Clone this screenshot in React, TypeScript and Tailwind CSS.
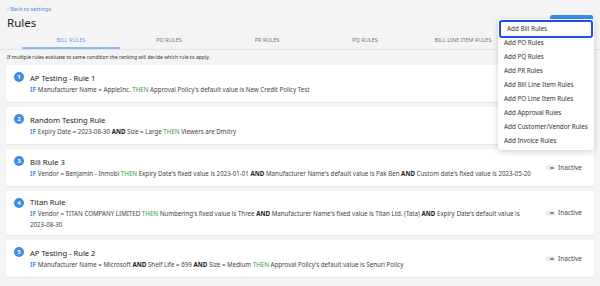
import React from "react";

const tabs = ["BILL RULES", "PO RULES", "PR RULES", "PQ RULES", "BILL LINE ITEM RULES"];

const menu = [
  "Add Bill Rules",
  "Add PO Rules",
  "Add PQ Rules",
  "Add PR Rules",
  "Add Bill Line Item Rules",
  "Add PO Line Item Rules",
  "Add Approval Rules",
  "Add Customer/Vendor Rules",
  "Add Invoice Rules",
];

const B = ({ children }: { children: React.ReactNode }) => <span className="font-bold text-[#222]">{children}</span>;
const T = () => <span className="text-[#2e9b3a]"> THEN </span>;
const If = () => <span className="text-[#4a90e2] font-bold mr-[2px]">IF</span>;
const D = ({ children }: { children: React.ReactNode }) => <span className="whitespace-nowrap">{children}</span>;

type Rule = { n: number; title: string; cond: React.ReactNode; toggle?: boolean };

const rules: Rule[] = [
  {
    n: 1,
    title: "AP Testing - Rule 1",
    cond: (
      <>
        <If />Manufacturer Name = AppleInc.<T />Approval Policy's default value is New Credit Policy Test
      </>
    ),
  },
  {
    n: 2,
    title: "Random Testing Rule",
    cond: (
      <>
        <If />Expiry Date = <D>2023-08-30</D> <B>AND</B> Size = Large<T />Viewers are Dmitry
      </>
    ),
  },
  {
    n: 3,
    title: "Bill Rule 3",
    toggle: true,
    cond: (
      <>
        <If />Vendor = Benjamin - Inmobi<T />Expiry Date's fixed value is <D>2023-01-01</D> <B>AND</B> Manufacturer Name's default value is Pak Ben <B>AND</B> Custom date's fixed value is <D>2023-05-20</D>
      </>
    ),
  },
  {
    n: 4,
    title: "Titan Rule",
    toggle: true,
    cond: (
      <>
        <If />Vendor = TITAN COMPANY LIMITED<T />Numbering's fixed value is Three <B>AND</B> Manufacturer Name's fixed value is Titan Ltd. (Tata) <B>AND</B> Expiry Date's default value is <D>2023-08-30</D>
      </>
    ),
  },
  {
    n: 5,
    title: "AP Testing - Rule 2",
    toggle: true,
    cond: (
      <>
        <If />Manufacturer Name = Microsoft <B>AND</B> Shelf Life = 699 <B>AND</B> Size = Medium<T />Approval Policy's default value is Senuri Policy
      </>
    ),
  },
];

const App = () => {
  return (
    <div className="relative w-[600px] h-[286px] overflow-hidden bg-[#f4f4f4] text-[#333]" style={{ fontFamily: '"Noto Sans", "Open Sans", sans-serif' }}>
      <div className="px-[7px] pt-[5px]">
        <div className="text-[5.5px] text-[#4a90e2] leading-[8px]">‹ Back to settings</div>
        <h1 className="text-[11.5px] leading-[16px] mt-[2px] text-[#222]">Rules</h1>
      </div>

      <div className="mt-[3px] flex border-b border-[#e2e2e2] pl-[22px]">
        {tabs.map((t, i) => (
          <div
            key={t}
            className={`w-[98px] shrink-0 text-center text-[5.5px] h-[15px] leading-[12px] border-b-[2px] ${
              i === 0 ? "text-[#6fa3ef] border-[#8cb8f5]" : "text-[#777] border-transparent"
            }`}
          >
            {t}
          </div>
        ))}
      </div>

      <p className="px-[7px] mt-[3px] text-[5px] leading-[8px] text-[#333]">
        If multiple rules evaluate to same condition the ranking will decide which rule to apply.
      </p>

      <div className="mt-[4px] px-[6px] flex flex-col gap-[5px]">
        {rules.map((r) => (
          <div key={r.n} className="bg-white rounded-[2px] shadow-[0_1px_1px_rgba(0,0,0,0.06)] flex items-center pl-[8px] pr-[12px] py-[5px] min-h-[37px]">
            <div className="self-start mt-[2px] w-[10px] h-[10px] rounded-full bg-[#3b8ced] text-white text-[6px] font-bold flex items-center justify-center shrink-0">
              {r.n}
            </div>
            <div className="ml-[6px] flex-1 min-w-0 pr-[10px]">
              <div className="text-[7.6px] leading-[12px] text-[#222]">{r.title}</div>
              <div className="text-[6.2px] leading-[11px] text-[#444] w-[512px]">{r.cond}</div>
            </div>
            {r.toggle && (
              <div className="flex items-center gap-[3px] shrink-0">
                <div className="w-[9px] h-[5px] rounded-full bg-[#ececec] flex items-center justify-end pr-[1px]">
                  <div className="w-[4px] h-[2px] rounded-full bg-[#888]" />
                </div>
                <span className="text-[6.5px] text-[#444]">Inactive</span>
              </div>
            )}
          </div>
        ))}
      </div>

      <div className="absolute left-[550px] top-[15px] w-[43px] h-[6px] rounded-t-[2px] bg-[#3b8ced]" />
      <div className="absolute left-[498px] top-[19px] w-[96px] bg-white rounded-[3px] shadow-[0_2px_6px_rgba(0,0,0,0.18)] py-[2px]">
        {menu.map((m, i) => (
          <div
            key={m}
            className={`h-[14px] flex items-center pl-[6px] text-[6.3px] text-[#333] ${
              i === 0 ? "mx-[1px] border-[2px] border-[#1f4fe0] rounded-[3px] pl-[4px] h-[18px] mb-[-2px] mt-[-1px]" : ""
            }`}
          >
            {m}
          </div>
        ))}
      </div>
    </div>
  );
};

export default App;
